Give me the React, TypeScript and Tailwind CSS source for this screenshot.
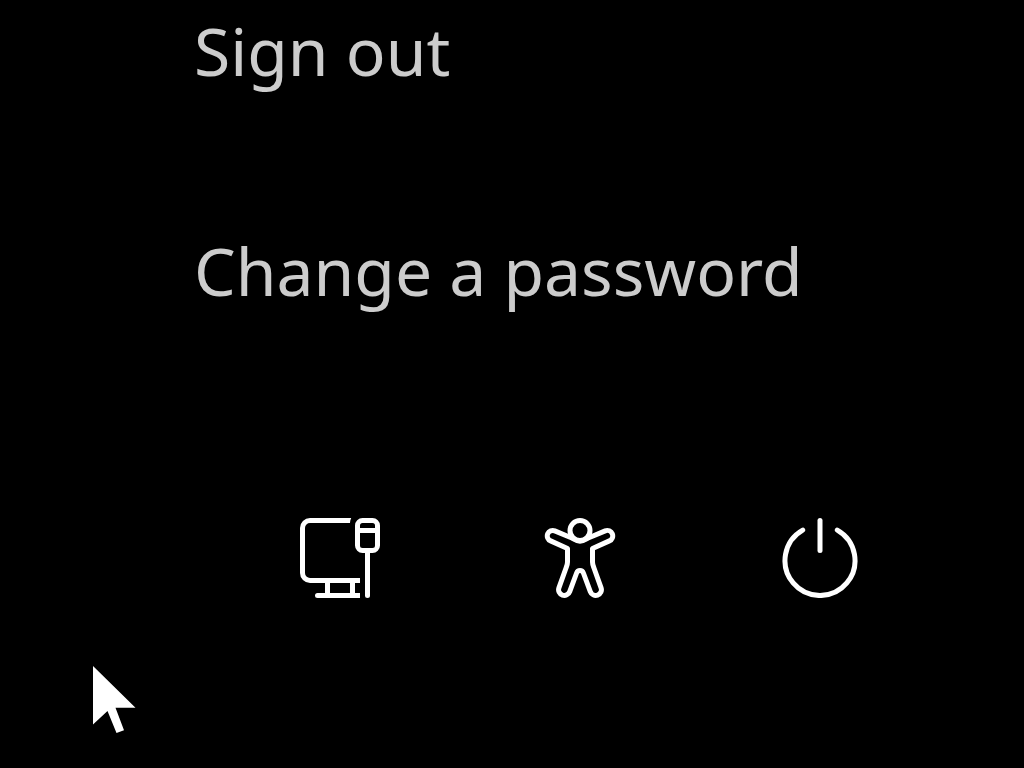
function NetworkIcon() {
  return (
    <svg
      className="size-20"
      viewBox="0 0 80 80"
      fill="none"
      stroke="currentColor"
      strokeWidth="5"
      aria-hidden="true"
    >
      {/* monitor and stand */}
      <path d="M50 2.5H10A7.5 7.5 0 0 0 2.5 10V55A7.5 7.5 0 0 0 10 62.5H60" />
      <path d="M51.2 0C50.4 1.6 50 3.2 50 5H48V0Z" fill="currentColor" stroke="none" />
      <path d="M27.5 62.5V77.5M52.5 62.5V77.5" />
      <path d="M60 77.5H17.5" />
      <circle cx="17.5" cy="77.5" r="2.5" fill="currentColor" stroke="none" />
      {/* plug and cable */}
      <rect x="57.5" y="2.5" width="20" height="30" rx="5" />
      <path d="M57.5 12.5H77.5" />
      <path d="M67.5 33V77.5" strokeLinecap="round" />
    </svg>
  )
}

function AccessibilityIcon() {
  return (
    <svg
      className="size-20"
      viewBox="0 0 80 80"
      fill="none"
      stroke="currentColor"
      strokeWidth="5"
      strokeLinecap="round"
      strokeLinejoin="round"
      aria-hidden="true"
    >
      <circle cx="40" cy="12.5" r="10" />
      <path d="M40 23.2C36 23.2 33.5 20.6 30 19.2L14.8 12.9A5.4 5.4 0 0 0 10.6 22.9L27.5 30.5V44C27.5 46 27 47.5 26.2 49.5L18.9 69.8A5.7 5.7 0 0 0 29.7 73.6L36.6 55C37.8 51.7 42.2 51.7 43.4 55L50.3 73.6A5.7 5.7 0 0 0 61.1 69.8L53.8 49.5C53 47.5 52.5 46 52.5 44V30.5L69.4 22.9A5.4 5.4 0 0 0 65.2 12.9L50 19.2C46.5 20.6 44 23.2 40 23.2Z" />
    </svg>
  )
}

function PowerIcon() {
  return (
    <svg
      className="size-20"
      viewBox="0 0 80 80"
      fill="none"
      stroke="currentColor"
      strokeWidth="5"
      strokeLinecap="round"
      aria-hidden="true"
    >
      <path d="M40 2.5V32.5" />
      <path d="M57.3 12.1A35 35 0 1 1 22.7 12.1" />
    </svg>
  )
}

const options = ['Sign out', 'Change a password']

const actions = [
  { label: 'Network', icon: <NetworkIcon /> },
  { label: 'Accessibility', icon: <AccessibilityIcon /> },
  { label: 'Power', icon: <PowerIcon /> },
]

export default function App() {
  return (
    <main className="relative min-h-screen bg-black pt-0.5 font-['Noto_Sans',sans-serif]">
      <nav className="flex flex-col items-start gap-[124px] pl-[194px]">
        {options.map((option) => (
          <button
            key={option}
            type="button"
            className="text-[66px] leading-[96px] whitespace-nowrap text-[#cccccc]"
          >
            {option}
          </button>
        ))}
      </nav>

      <div className="flex gap-40 pt-50 pl-75 text-white">
        {actions.map(({ label, icon }) => (
          <button key={label} type="button" aria-label={label}>
            {icon}
          </button>
        ))}
      </div>

      {/* mouse pointer */}
      <svg
        className="pointer-events-none absolute top-[666px] left-[93px] h-[68px] w-11"
        viewBox="0 0 44 68"
        fill="white"
        aria-hidden="true"
      >
        <path d="M0 0L42.5 41.7H22.5L31 64.2L23.5 67L14.5 45L0 58.5Z" />
      </svg>
    </main>
  )
}
